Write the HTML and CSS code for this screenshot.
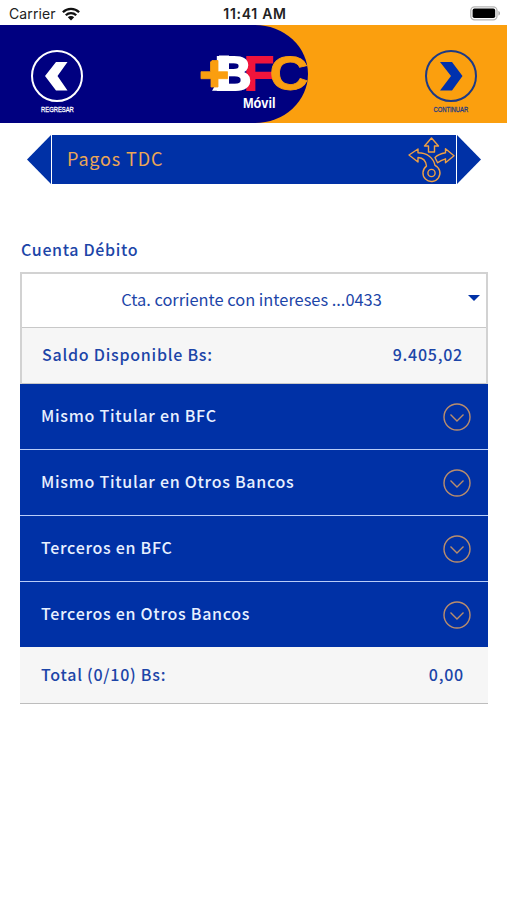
FILE: index.html
```html
<!DOCTYPE html>
<html lang="es">
<head>
<meta charset="utf-8">
<title>Pagos TDC</title>
<link rel="stylesheet" href="styles.css">
</head>
<body>
<div class="status">
  <div class="carrier"><span>Carrier</span>
    <svg width="18" height="14" viewBox="0 0 18 14"><g fill="none" stroke="#111" stroke-width="2.3"><path d="M.9 5.2a11.5 11.5 0 0 1 16.2 0"/><path d="M3.8 8.2a7.4 7.4 0 0 1 10.4 0"/></g><path d="M5.8 10.3a4.6 4.6 0 0 1 6.4 0L9 13.6z" fill="#111"/></svg>
  </div>
  <div class="time">11:41 AM</div>
  <svg class="battery" width="31" height="15" viewBox="0 0 31 15"><rect x=".8" y=".8" width="26.2" height="13" rx="3.8" fill="#fff" stroke="#b5b5b5" stroke-width="1.3"/><rect x="2.6" y="2.6" width="22.6" height="9.4" rx="1.8"/><path d="M28.4 5v4.6c2.2-.7 2.2-3.9 0-4.6z" fill="#aaa"/></svg>
</div>
<header class="top">
  <div class="brand-shape"></div>
  <button class="nav back">
    <svg width="54" height="54" viewBox="0 0 54 54"><circle cx="27" cy="27" r="25" fill="none" stroke="#fff" stroke-width="2"/><path d="M26 13h11.500L27.500 27 37.500 41.500H26L15 27z" fill="#fff"/></svg>
    <span>REGRESAR</span>
  </button>
  <svg class="logo" width="112" height="62" viewBox="0 0 112 62">
    <text class="bfc wide" x="44" y="38.800" textLength="30" lengthAdjust="spacingAndGlyphs" fill="#f0143c" stroke="#f0143c">F</text>
    <path d="M12 39.800L19 28V4.500h10v35.300z" fill="#fff"/>
    <text class="bfc wide" x="14.500" y="38.800" textLength="37" lengthAdjust="spacingAndGlyphs" fill="#fff" stroke="#fff">B</text>
    <text class="bfc" x="69.500" y="39.300" textLength="39" lengthAdjust="spacingAndGlyphs" fill="#fa9e10" stroke="#fa9e10">C</text>
    <path d="M12 9.500h6v11.200h9.500v7H18V36h-7v-8.300H1v-7h9.500V11z" fill="#fa9e10" stroke="#fa9e10" stroke-width=".8"/>
    <text class="movil" x="43" y="56.800" textLength="32.500" lengthAdjust="spacingAndGlyphs">Móvil</text>
  </svg>
  <button class="nav next">
    <svg width="54" height="54" viewBox="0 0 54 54"><circle cx="27" cy="27" r="25" fill="none" stroke="#1c3a86" stroke-width="2"/><path d="M28 13H16l11 14-11 14.500h12L38.500 27z" fill="#0031ae"/></svg>
    <span>CONTINUAR</span>
  </button>
</header>
<div class="banner">
  <svg width="24" height="49" viewBox="0 0 24 49"><path d="M24 0v49L0 24.500z" fill="#0031a6"/></svg>
  <div class="banner-body">
    <h1>Pagos TDC</h1>
    <svg width="48" height="46" viewBox="0 0 48 46" fill="none" stroke="#efa044" stroke-width="1.400" stroke-linejoin="round"><path d="M23.500 1l7 8h-4v6h-6V9h-4z"/><path d="M1 18l9-6v3.800c9 0 15.500 5 17 12.500a8.500 8.500 0 1 1-8.500.8C18 24 15.500 20.800 10 20.500V25z"/><path d="M27 20.500l2.600 5.300c2.500-2 4.700-3 7.900-4v4l8.500-7-8.500-7v4c-4.200.8-8 2.200-10.500 4.700z"/><circle cx="23.500" cy="36" r="3.600"/></svg>
  </div>
  <svg width="24" height="49" viewBox="0 0 24 49"><path d="M0 0v49l24-24.500z" fill="#0031a6"/></svg>
</div>
<main>
  <h2>Cuenta Débito</h2>
  <section class="account">
    <div class="select"><span>Cta. corriente con intereses ...0433</span><i class="caret"></i></div>
    <div class="balance"><span>Saldo Disponible Bs:</span><span>9.405,02</span></div>
  </section>
  <section class="groups">
    <div class="group"><span>Mismo Titular en BFC</span><svg width="28" height="28" viewBox="0 0 28 28"><circle cx="14" cy="14" r="13"/><path d="M7.500 11.500l6.500 6.500 6.500-6.500"/></svg></div>
    <div class="group"><span>Mismo Titular en Otros Bancos</span><svg width="28" height="28" viewBox="0 0 28 28"><circle cx="14" cy="14" r="13"/><path d="M7.500 11.500l6.500 6.500 6.500-6.500"/></svg></div>
    <div class="group"><span>Terceros en BFC</span><svg width="28" height="28" viewBox="0 0 28 28"><circle cx="14" cy="14" r="13"/><path d="M7.500 11.500l6.500 6.500 6.500-6.500"/></svg></div>
    <div class="group"><span>Terceros en Otros Bancos</span><svg width="28" height="28" viewBox="0 0 28 28"><circle cx="14" cy="14" r="13"/><path d="M7.500 11.500l6.500 6.500 6.500-6.500"/></svg></div>
  </section>
  <div class="total"><span>Total (0/10) Bs:</span><span>0,00</span></div>
</main>
</body>
</html>
```
FILE: styles.css
```css
* { box-sizing: border-box; }
body { margin: 0; height: 900px; background: #fff; color: #1c45a8; font: 500 16px/24px "Noto Sans CJK SC", "Open Sans", sans-serif; overflow: hidden; }
svg { display: block; flex: none; }
h1, h2 { margin: 0; }
.status { height: 25px; display: grid; grid-template-columns: 1fr auto 1fr; align-items: center; padding: 1px 6px 0 9px; font: 400 14px/24px Inter, sans-serif; color: #222; }
.carrier { display: flex; align-items: center; gap: 6px; letter-spacing: .1px; }
.time { font-weight: 600; font-size: 14px; letter-spacing: .7px; padding-top: 1px; }
.battery { justify-self: end; }
.top { position: relative; height: 98px; background: #fb9f0e; display: grid; grid-template-columns: 114px 1fr 113px; }
.brand-shape { position: absolute; inset: 0 auto 0 0; width: 308px; background: #000080; border-radius: 0 53px 53px 0 / 0 49px 49px 0; }
.nav { position: relative; padding: 24px 0 0; border: 0; background: none; display: flex; flex-direction: column; align-items: center; justify-content: flex-start; color: #fff; font: 400 8px/10px "Liberation Sans", sans-serif; }
.nav span { margin-top: 2px; transform: scaleX(.73); -webkit-text-stroke: .3px currentColor; }
.next { color: #1c3a86; }
.logo { position: relative; margin: 26px 0 0 86px; overflow: visible; }
.bfc { font: 700 48.500px "Liberation Sans", sans-serif; stroke-width: .8; }
.wide { stroke-width: 2; }
.movil { font: 700 14px "Liberation Sans", sans-serif; fill: #fff; }
.banner { display: flex; gap: 1px; padding: 12px 26px 0 27px; }
.banner > svg:first-child, .banner-body { box-shadow: none; }
.banner-body { flex: 1; height: 49px; display: flex; align-items: center; justify-content: space-between; padding: 0 0 0 15px; background: #0031a6; }
h1 { font-size: 18px; font-weight: 400; letter-spacing: .850px; color: #eba656; padding-bottom: 3px; }
main { padding: 53px 19px 0 20px; }
h2 { font-size: 16px; font-weight: 500; line-height: 24px; letter-spacing: .650px; padding-left: 1px; }
.account { margin-top: 11px; border: 2px solid #d2d2d2; border-bottom: 0; }
.select { position: relative; height: 54px; display: flex; align-items: center; justify-content: center; padding: 0 5px 4px 0; border-bottom: 1px solid #c8c8c8; font-size: 16.400px; font-weight: 400; }
.caret { position: absolute; right: 6px; top: 21px; border: 6px solid transparent; border-top-color: #0031a6; border-bottom: 0; }
.balance { height: 56px; display: flex; align-items: center; justify-content: space-between; padding: 0 23px 3px 20px; background: #f6f6f6; letter-spacing: .750px; border-bottom: 1px solid #c8c8c8; }
.groups { display: grid; gap: 1px; background: #b9cdf8; }
.group { height: 65px; display: flex; align-items: center; justify-content: space-between; padding: 0 17px 0 21px; background: #0031a6; color: #e8f0ff; letter-spacing: .720px; }
.group span { padding-bottom: 3px; }
.group svg { fill: none; stroke: #b98d6c; stroke-width: 1.400; }
.total { height: 57px; display: flex; align-items: center; justify-content: space-between; padding: 0 24px 3px 21px; background: #f6f6f6; border-bottom: 1px solid #bdbdbd; letter-spacing: .750px; }
```
